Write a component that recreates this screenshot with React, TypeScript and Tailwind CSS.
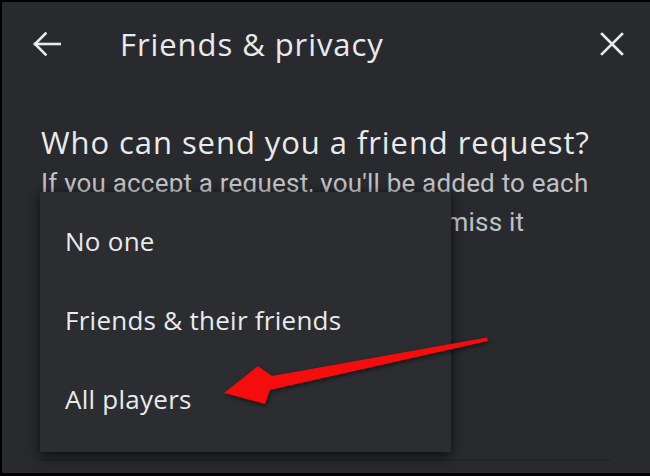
import React from "react";

const options = ["No one", "Friends & their friends", "All players"];

function BackArrow() {
  return (
    <svg width="28" height="24" viewBox="0 0 28 24" fill="none" stroke="#e8eaed" strokeWidth="2.6" strokeLinecap="square">
      <path d="M2 12H27" />
      <path d="M12.5 1.5L2 12l10.5 10.5" />
    </svg>
  );
}

function CloseIcon() {
  return (
    <svg width="24" height="24" viewBox="0 0 24 24" fill="none" stroke="#e8eaed" strokeWidth="2.6" strokeLinecap="square">
      <path d="M2 2L22 22M22 2L2 22" />
    </svg>
  );
}

export default function App() {
  return (
    <div className="h-[476px] w-[650px] bg-black pb-[3px] pl-[2px] pt-[2px]">
      <div
        className="relative flex h-full flex-col overflow-hidden bg-[#292a2e] text-[#e8eaed]"
        style={{ fontFamily: "Roboto, 'Liberation Sans', sans-serif" }}
      >
        <header className="flex h-[84px] items-center pl-[31px] pr-[26px]">
          <BackArrow />
          <h1 className="ml-[59px] flex-1 font-['Open_Sans',sans-serif] text-[31px] font-medium leading-none tracking-[0.03em]">
            Friends &amp; privacy
          </h1>
          <CloseIcon />
        </header>

        <section className="pl-[39px] pr-[30px] pt-[38px]">
          <h2 className="font-['Open_Sans',sans-serif] text-[31px] font-medium leading-[36px] tracking-[0.03em]">
            Who can send you a friend request?
          </h2>
          <p className="mt-[4px] text-[26px] leading-[39px] tracking-[0.2px] text-[#bfc2c5]">
            If you accept a request, you'll be added to each other's friends list, and you can dismiss it
          </p>
        </section>

        <div className="mt-auto mb-[12px] ml-[38px] h-[2px] w-[570px] bg-[#232427]" />

        <div className="absolute left-[38px] top-[190px] h-[260px] w-[411px] bg-[#2b2d31] py-[10px] shadow-[0_6px_12px_rgba(0,0,0,0.45),0_0_8px_rgba(0,0,0,0.35)]">
          {options.map((label) => (
            <div
              key={label}
              className="flex h-[79px] items-center px-[25px] font-['Open_Sans',sans-serif] text-[26px] tracking-[0.01em] text-[#e8eaed]"
            >
              {label}
            </div>
          ))}
        </div>

        <svg className="pointer-events-none absolute left-0 top-0" width="648" height="471" viewBox="0 0 648 471">
          <g transform="translate(-2 -2)" style={{ filter: "drop-shadow(1px 2px 2px rgba(0,0,0,0.5))" }}>
            <path
              d="M487 337.5 L272 376 L258 366 L224 393 L265 404 L270 390 L488 341 Z"
              fill="#f50c0c"
            />
          </g>
        </svg>
      </div>
    </div>
  );
}
